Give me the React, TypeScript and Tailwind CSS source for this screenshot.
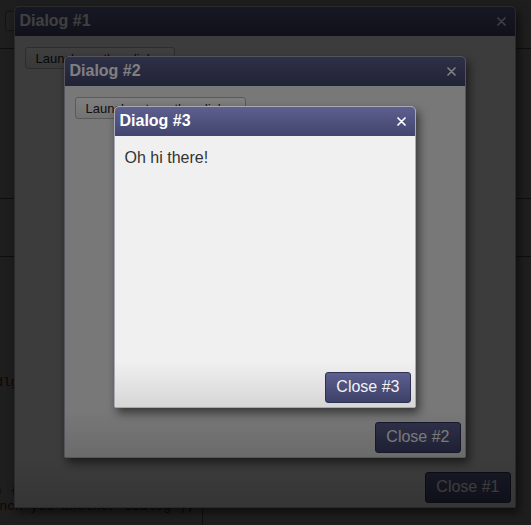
import React from 'react';

interface DialogProps {
  title: string;
  size: string;
  closeLabel: string;
  children: React.ReactNode;
}

const CloseX = () => (
  <svg width="9" height="9" viewBox="0 0 9 9" className="block">
    <path d="M1 1 L8 8 M8 1 L1 8" stroke="#fff" strokeWidth="1.7" strokeLinecap="round" />
  </svg>
);

const Dialog: React.FC<DialogProps> = ({ title, size, closeLabel, children }) => (
  <div
    className={`${size} flex flex-col border border-[#a9a9b5] rounded-t-[5px] rounded-b-[2px] bg-[#f0f0f0] shadow-[3px_5px_10px_rgba(0,0,0,0.55)] overflow-hidden`}
  >
    <div className="flex h-[29px] shrink-0 items-center justify-between bg-gradient-to-b from-[#5d608f] to-[#42456d] pl-[5px] pr-[9px]">
      <span className="text-[16px] font-bold text-white">{title}</span>
      <CloseX />
    </div>
    <div className="flex-1 p-[10px] text-[16px] text-[#333]">{children}</div>
    <div className="flex h-[46px] shrink-0 items-end justify-end bg-gradient-to-b from-[#f0f0f0] to-[#d6d6d6] pb-[4px] pr-[4px]">
      <button className="h-[31px] rounded-[3px] border border-[#2e3052] bg-gradient-to-b from-[#5d608f] to-[#3d4068] px-[10px] text-[16px] text-[#f2f2f2]">
        {closeLabel}
      </button>
    </div>
  </div>
);

const LaunchButton: React.FC<{ label: string }> = ({ label }) => (
  <button className="h-[22px] rounded-[3px] border border-[#b4b4b4] bg-gradient-to-b from-white to-[#e6e6e6] px-[10px] text-[13px] leading-none text-[#222]">
    {label}
  </button>
);

const Layer: React.FC<{ children: React.ReactNode }> = ({ children }) => (
  <div className="absolute inset-0 flex items-center justify-center bg-black/50 pb-[12px] pr-[2px]">
    {children}
  </div>
);

const Page = () => (
  <div className="flex h-full flex-col bg-[#f1f1f1]">
    <div className="flex h-[49px] shrink-0 items-start border-b border-[#777] pl-[5px] pt-[11px]">
      <button className="h-[20px] w-[60px] rounded-[3px] border border-[#999] bg-white" />
    </div>
    <div className="h-[150px] border-b border-[#777]" />
    <div className="h-[58px] border-b border-[#777]" />
    <div className="flex flex-1">
      <div className="w-[203px] border-r border-[#888] pt-[118px] font-['Liberation_Mono',monospace] text-[13px] leading-[16px] text-[#b01818]">
        <div className="-ml-[36px]">{"$('#dlg').dialog(); and"}</div>
        <div className="mt-[92px] -ml-[44px]">{"if (t) { nu"}</div>
        <div className="-ml-[24px] whitespace-nowrap">{"Launch yet another dialog');"}</div>
      </div>
    </div>
  </div>
);

export default function App() {
  return (
    <div className="relative h-[525px] w-[531px] overflow-hidden font-['Liberation_Sans',Arial,sans-serif]">
      <Page />
      <Layer>
        <Dialog title="Dialog #1" size="w-[502px] h-[502px]" closeLabel="Close #1">
          <LaunchButton label="Launch another dialog" />
        </Dialog>
      </Layer>
      <Layer>
        <Dialog title="Dialog #2" size="w-[402px] h-[402px]" closeLabel="Close #2">
          <LaunchButton label="Launch yet another dialog" />
        </Dialog>
      </Layer>
      <Layer>
        <Dialog title="Dialog #3" size="w-[302px] h-[302px]" closeLabel="Close #3">
          <p>Oh hi there!</p>
        </Dialog>
      </Layer>
    </div>
  );
}
